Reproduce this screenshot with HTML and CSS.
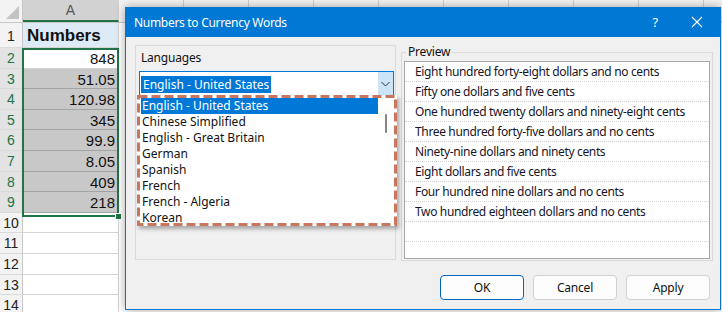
FILE: index.html
```html
<!doctype html>
<html>
  <head>
    <meta charset="utf-8">
    <link rel="stylesheet" href="styles.css">
  </head>
  <body>
    <div class="sheet">
      <div class="colhead">
        <div class="corner"><span class="corner-tri"></span></div>
        <div class="ch ch-a">A</div>
        <div class="ch"></div>
        <div class="ch"></div>
        <div class="ch"></div>
        <div class="ch"></div>
        <div class="ch"></div>
        <div class="ch"></div>
        <div class="ch"></div>
        <div class="ch"></div>
        <div class="ch"></div>
      </div>
      <div class="row row-head"><div class="rh">1</div><div class="cell cell-head">Numbers</div></div>
      <div class="row"><div class="rh sel">2</div><div class="cell">848</div></div>
      <div class="row"><div class="rh sel">3</div><div class="cell hl">51.05</div></div>
      <div class="row"><div class="rh sel">4</div><div class="cell hl">120.98</div></div>
      <div class="row"><div class="rh sel">5</div><div class="cell hl">345</div></div>
      <div class="row"><div class="rh sel">6</div><div class="cell hl">99.9</div></div>
      <div class="row"><div class="rh sel">7</div><div class="cell hl">8.05</div></div>
      <div class="row"><div class="rh sel">8</div><div class="cell hl">409</div></div>
      <div class="row"><div class="rh sel">9</div><div class="cell hl">218</div></div>
      <div class="row"><div class="rh">10</div><div class="cell"></div></div>
      <div class="row"><div class="rh">11</div><div class="cell"></div></div>
      <div class="row"><div class="rh">12</div><div class="cell"></div></div>
      <div class="row"><div class="rh">13</div><div class="cell"></div></div>
      <div class="row"><div class="rh">14</div><div class="cell"></div></div>
    </div>
    <div class="selection"><span class="fill-handle"></span></div>

    <div class="dialog">
      <div class="titlebar">
        <span class="title">Numbers to Currency Words</span>
        <span class="help">?</span>
        <svg class="close" width="12" height="12" viewBox="0 0 12 12"><path d="M1 1 L11 11 M11 1 L1 11" stroke="#fff" stroke-width="1.1" fill="none"/></svg>
      </div>
      <div class="dlg-body">
        <div class="panes">
          <div class="lang-box">
            <div class="label">Languages</div>
            <div class="combo">
              <span class="combo-val"><span class="combo-sel">English - United States</span></span>
              <span class="combo-btn"><svg width="9" height="6" viewBox="0 0 9 6"><path d="M0.5 1 L4.5 5 L8.5 1" stroke="#333" stroke-width="1" fill="none"/></svg></span>
            </div>
          </div>
          <fieldset class="preview">
            <legend>Preview</legend>
            <ul class="preview-list">
              <li>Eight hundred forty-eight dollars and no cents</li>
              <li>Fifty one dollars and five cents</li>
              <li>One hundred twenty dollars and ninety-eight cents</li>
              <li>Three hundred forty-five dollars and no cents</li>
              <li>Ninety-nine dollars and ninety cents</li>
              <li>Eight dollars and five cents</li>
              <li>Four hundred nine dollars and no cents</li>
              <li>Two hundred eighteen dollars and no cents</li>
              <li></li>
            </ul>
          </fieldset>
        </div>
        <div class="buttons">
          <button class="btn btn-ok">OK</button>
          <button class="btn">Cancel</button>
          <button class="btn">Apply</button>
        </div>
      </div>
    </div>

    <div class="dropdown">
      <ul class="lang-list">
        <li class="active">English - United States</li>
        <li>Chinese Simplified</li>
        <li>English - Great Britain</li>
        <li>German</li>
        <li>Spanish</li>
        <li>French</li>
        <li>French - Algeria</li>
        <li>Korean</li>
      </ul>
      <div class="scroll"><span class="thumb"></span></div>
      <svg class="dash" width="260" height="131" viewBox="0 0 260 131"><rect x="1.5" y="1.5" width="257" height="128" fill="none" stroke="#c9765f" stroke-width="3" stroke-dasharray="9 4"/></svg>
    </div>
  </body>
</html>
```

FILE: styles.css
```css
body {
  margin: 0;
  width: 722px;
  height: 312px;
  overflow: hidden;
  position: relative;
  background: #fff;
  font-family: "Liberation Sans", Arial, sans-serif;
}

/* spreadsheet behind the dialog */
.colhead {
  display: flex;
  height: 23px;
  background: #f3f3f3;
  box-sizing: border-box;
  border-bottom: 1px solid #c8c8c8;
}
.corner {
  width: 23px;
  flex: none;
  box-sizing: border-box;
  border-right: 1px solid #c8c8c8;
  position: relative;
}
.corner-tri {
  position: absolute;
  right: 3px;
  bottom: 3px;
  width: 0;
  height: 0;
  border-left: 13px solid transparent;
  border-bottom: 13px solid #c4c4c4;
}
.ch {
  width: 65px;
  flex: none;
  box-sizing: border-box;
  border-right: 1px solid #d0d0d0;
  text-align: center;
  font-size: 14px;
  line-height: 22px;
  color: #444;
}
.ch-a {
  width: 96px;
  background: #d2d2d2;
  border-bottom: 2px solid #217346;
  line-height: 20px;
  color: #555;
}
.row {
  display: flex;
  height: 20.6px;
}
.row-head {
  height: 25px;
}
.rh {
  width: 23px;
  flex: none;
  box-sizing: border-box;
  background: #f3f3f3;
  border-right: 1px solid #c8c8c8;
  border-bottom: 1px solid #dadada;
  text-align: center;
  font-size: 14px;
  line-height: 21px;
  color: #222;
}
.row-head .rh {
  line-height: 27px;
}
.rh.sel {
  background: #e3e3e3;
  color: #217346;
}
.cell {
  width: 96px;
  flex: none;
  box-sizing: border-box;
  border-right: 1px solid #d4d4d4;
  border-bottom: 1px solid #d4d4d4;
  padding-right: 3px;
  text-align: right;
  font-size: 15px;
  line-height: 21px;
  color: #111;
}
.cell-head {
  background: #ddebf7;
  text-align: left;
  padding-left: 4px;
  font-weight: bold;
  font-size: 17px;
  line-height: 26px;
}
.cell.hl {
  background: #c8c8c8;
  border-bottom-color: #a3a3a3;
}
.selection {
  position: absolute;
  left: 22px;
  top: 47.5px;
  width: 97px;
  height: 169px;
  box-sizing: border-box;
  border: 2px solid #217346;
}
.fill-handle {
  position: absolute;
  right: -5px;
  bottom: -5px;
  width: 5px;
  height: 5px;
  background: #217346;
  border: 1px solid #fff;
}

/* dialog */
.dialog {
  position: absolute;
  left: 125px;
  top: 7px;
  width: 596px;
  height: 303px;
  box-sizing: border-box;
  border: 1px solid #0078d4;
  border-top: 0;
  background: #f0f0f0;
  box-shadow: 0 0 9px rgba(0, 0, 0, 0.35);
  font-family: "Noto Sans", "Open Sans", sans-serif;
  font-size: 12px;
  letter-spacing: -0.2px;
  color: #111;
}
.titlebar {
  display: flex;
  align-items: center;
  height: 30px;
  margin: 0 -1px;
  padding-left: 9px;
  background: #0078d4;
  color: #fff;
}
.title {
  flex: 1;
  font-size: 12px;
  letter-spacing: -0.3px;
}
.help {
  font-size: 13px;
  margin-right: 33px;
}
.close {
  margin-right: 18px;
}
.dlg-body {
  padding: 8px 7px 0 9px;
}
.panes {
  display: flex;
  gap: 5px;
}
.lang-box {
  width: 261px;
  height: 215px;
  box-sizing: border-box;
  border: 1px solid #dadada;
  padding: 4px 0 0 3px;
}
.label {
  line-height: 16px;
  padding-left: 2px;
}
.combo {
  display: flex;
  width: 255px;
  height: 26px;
  margin-top: 5px;
  box-sizing: border-box;
  border: 1px solid #0078d7;
  background: #fff;
  align-items: center;
}
.combo-val {
  flex: 1;
  padding-left: 1px;
}
.combo-sel {
  display: inline-block;
  padding: 0 2px;
  line-height: 17px;
  background: #0078d7;
  color: #fff;
  letter-spacing: 0;
}
.combo-btn {
  width: 15px;
  height: 24px;
  background: #cce4f7;
  display: flex;
  align-items: center;
  justify-content: center;
}
.preview {
  width: 312px;
  margin: 0;
  padding: 0 2px 1px;
  box-sizing: border-box;
  border: 1px solid #dadada;
  min-width: 0;
}
.preview legend {
  margin-left: 2px;
  padding: 0 2px;
  line-height: 14px;
}
.preview-list {
  list-style: none;
  margin: 2px 0 0;
  padding: 0;
  height: 198px;
  box-sizing: border-box;
  border: 1px solid #a8a8a8;
  background: #fff;
  overflow: hidden;
}
.preview-list li {
  height: 20px;
  box-sizing: border-box;
  border-bottom: 1px dotted #d6d6d6;
  padding-left: 10px;
  line-height: 19px;
  letter-spacing: -0.35px;
  color: #15152a;
  white-space: nowrap;
}
.buttons {
  display: flex;
  justify-content: flex-end;
  gap: 9px;
  margin-top: 14px;
  padding-right: 3px;
}
.btn {
  width: 84px;
  height: 25px;
  box-sizing: border-box;
  border: 1px solid #d0d0d0;
  border-radius: 4px;
  background: #fdfdfd;
  font-family: inherit;
  font-size: 12px;
  letter-spacing: -0.2px;
  color: #111;
  padding: 0;
}
.btn-ok {
  border-color: #0067c0;
}

/* open language list, drawn over the dialog */
.dropdown {
  position: absolute;
  left: 137px;
  top: 95px;
  width: 260px;
  height: 131px;
  box-sizing: border-box;
  padding: 3px 3px 3px 4px;
  display: flex;
  background: #fff;
  box-shadow: 2px 3px 4px rgba(0, 0, 0, 0.3);
  font-family: "Noto Sans", "Open Sans", sans-serif;
  font-size: 12px;
  color: #111;
}
.lang-list {
  flex: 1;
  list-style: none;
  margin: 0;
  padding: 0;
}
.lang-list li {
  height: 16px;
  line-height: 16px;
  padding-left: 1px;
  white-space: nowrap;
}
.lang-list li.active {
  background: #0078d7;
  color: #fff;
}
.scroll {
  width: 16px;
  position: relative;
}
.thumb {
  position: absolute;
  left: 7px;
  top: 16px;
  width: 2px;
  height: 19px;
  border-radius: 1px;
  background: #858585;
}
.dash {
  position: absolute;
  left: 0;
  top: 0;
}
```
